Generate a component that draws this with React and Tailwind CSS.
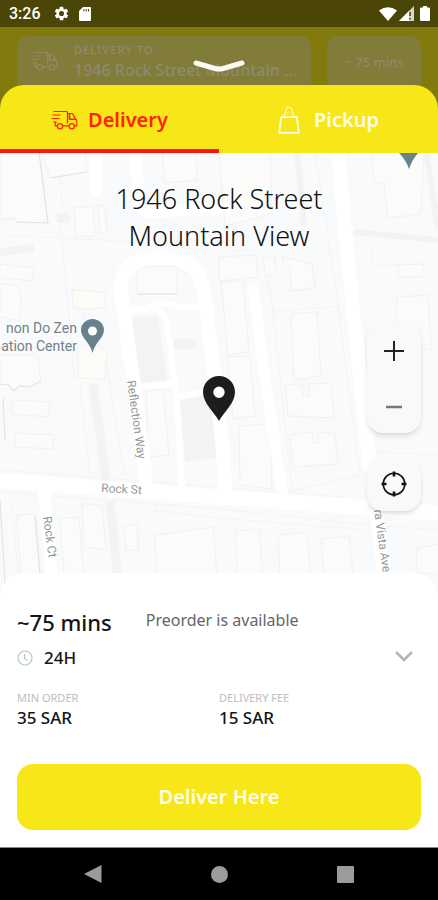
import React, { useState } from "react";

const TruckIcon = ({ className }) => (
  <svg viewBox="0 0 27 20" className={className} fill="none" stroke="currentColor" strokeWidth="1.2" strokeLinecap="round" strokeLinejoin="round">
    <path d="M3 1.500H15.500Q16.500 1.500 16.500 2.500V13M2 5H9M1 8.500H8M2.500 12H5.500M4.500 12L4 15.800H6M12 15.800H18M23.500 15.800H25.800V11Q25.800 9.500 24.500 9M16.500 3.500H21.500L24.500 9" />
    <path d="M18.500 3.800V9.200H24.300" strokeWidth="1.600" />
    <circle cx="9" cy="16.300" r="2.600" />
    <circle cx="20.800" cy="16.300" r="2.600" />
  </svg>
);

const BagIcon = ({ className }) => (
  <svg viewBox="0 0 22 28" className={className} fill="none" stroke="currentColor" strokeLinejoin="round">
    <path d="M3.200 11.200H18.800L20.800 26.800H1.200Z" strokeWidth="1.700" />
    <path d="M6 11L8.200 3.500Q8.800 1.300 11 1.300T13.800 3.500L16 11" strokeWidth="1.400" opacity=".7" />
    <path d="M8.500 9L9.800 6H12.200L13.500 9" strokeWidth="1" opacity=".4" />
  </svg>
);

const buildings = [
  "0,150 39,150 48,223 16,222 15,218 0,219",
  "41,150 50,178 87,172 85,150",
  "163,150 196,150 197,180 164,183",
  "74,208 93,206 95,236 76,237",
  "98,206 105,205 107,232 100,234",
  "0,264 34,268 33,281 0,278",
  "0,284 14,285 21,291 20,321 0,317",
  "0,355 37,355 41,381 30,387 19,386 14,391 9,385 0,384",
  "12,400 50,402 49,417 11,414",
  "16,433 54,435 53,449 15,447",
  "137,267 177,266 177,294 137,294",
  "146,391 163,389 169,455 148,457",
  "17,515 35,514 43,600 22,600",
  "60,518 79,517 86,600 66,600",
  "82,504 102,505 106,549 84,548",
  "123,526 137,524 139,549 126,551",
  "155,535 213,527 219,600 157,600",
  "219,154 270,150 272,214 225,226",
  "219,257 256,255 258,277 219,281",
  "263,258 275,257 276,275 266,276",
  "282,257 312,264 315,288 291,291 290,268 284,266",
  "221,282 243,281 249,352 228,355",
  "291,314 317,312 321,376 294,380",
  "371,150 374,182 384,183 388,218 421,214 424,150",
  "398,265 424,264 424,277 398,277",
  "397,297 428,295 431,350 394,345",
  "227,357 250,356 255,416 233,419",
  "285,385 302,384 303,396 309,396 309,384 331,383 334,418 288,416",
  "290,435 312,432 313,443 318,443 318,432 335,434 338,464 292,467",
  "239,426 270,424 272,489 240,485",
  "235,531 259,529 265,600 239,600",
  "278,535 307,532 313,600 281,600",
  "321,539 349,536 356,600 326,600",
  "417,548 440,544 440,575 416,572",
];

const MapCanvas = () => (
  <svg viewBox="0 153 438 444" preserveAspectRatio="xMidYMin slice" className="absolute inset-0 w-full h-full bg-[#f9fafb]">
    <g fill="none" stroke="#f2f3f5">
      <path d="M93 384L106 480M110 500L120 600" strokeWidth="9" />
      <path d="M354 232L438 240M426 150L438 228M297 150L304 225" strokeWidth="6" />
      <path d="M0 252L34 248" strokeWidth="8" />
      <path d="M57 218H70M174 344H196" strokeWidth="10" />
    </g>
    <g fill="none" stroke="#f3f4f4" strokeWidth="1">
      <path d="M0 235L120 241L205 250L330 250M60 225L68 300L74 380M60 150L62 210M0 470L130 480L345 497M0 492L36 494M52 496L220 509L370 525L438 530" />
      <path d="M262 255L274 312L338 306L360 475L288 492M315 150L340 315M370 230L372 265L438 264M375 445L382 500M438 455L375 452M12 500L20 600M155 500L158 520" />
      <path d="M152 510L219 518L366 530M80 385L90 475M107 365L124 475M270 285L292 490" />
    </g>
    <g fill="#fbfbfa" stroke="#f1f1f0" strokeWidth="1">
      {buildings.map((points) => (
        <polygon key={points} points={points} />
      ))}
    </g>
    <path d="M72 290L105 292L105 308L82 309L84 320M72 290L73 307L82 309M78 345L107 348L105 379L78 378Z" fill="#fdfbf7" stroke="#f6f2ea" />
    <path d="M137 294H177M16 222L48 223L39 153M0 500L6 600M35 515L42 600M3 398L5 440M50 178L87 172M0 384L9 385L14 391L19 386L30 387L41 381" fill="none" stroke="#e4e4e3" strokeWidth="1.200" />
    <g fill="#f1f3f4">
      <polygon points="131,318 158,316 167,380 137,384" />
      <polygon points="180,398 214,393 220,457 185,462" />
    </g>
    <g fill="none" stroke="#fff" strokeLinecap="round" strokeLinejoin="round">
      <path d="M96 145V190" strokeWidth="12" />
      <path d="M135 145L139 205Q141 212 155 212L225 208" strokeWidth="12" />
      <path d="M146 482L134 385L121 292Q119 262 152 258Q190 256 198 274Q205 286 207 315L221 430L226 495" strokeWidth="14" />
      <path d="M128 310L155 309Q165 312 167 325L176 390L182 485M150 306Q162 300 178 307L203 306M140 387L174 383M180 397L210 391" strokeWidth="6" />
      <path d="M253 288L264 370L282 492" strokeWidth="11" />
      <path d="M338 145L344 220L355 330L366 430L388 605" strokeWidth="14" />
      <path d="M-10 480L219 497L450 514" strokeWidth="15" />
      <path d="M44 490L54 605" strokeWidth="12" />
    </g>
    <g fill="#94989b" fontFamily="Roboto, sans-serif" fontSize="12">
      <text x="101" y="492" transform="rotate(3 101 492)">Rock St</text>
      <text x="127" y="381" transform="rotate(82 127 381)">Reflection Way</text>
      <text x="43" y="517" transform="rotate(82 43 517)">Rock Ct</text>
      <text x="374" y="510" transform="rotate(82 374 510)">ra Vista Ave</text>
    </g>
    <g fill="#74828a" fontFamily="Roboto, sans-serif" fontSize="14" textAnchor="end">
      <text x="77" y="333">non Do Zen</text>
      <text x="77" y="351">ation Center</text>
    </g>
    <path d="M92.500 319C86 319 81 324 81 330C81 338 90 342 92.500 353C95 342 104 338 104 330C104 324 99 319 92.500 319Z" fill="#69818d" />
    <circle cx="92.500" cy="331" r="4.500" fill="#fff" />
    <path d="M399 153H418Q412 160 409 169Q406 160 399 153Z" fill="#69818d" />
  </svg>
);

const StatusBar = () => (
  <div className="h-[27px] bg-[#4b4608] text-white flex items-center justify-between pl-[9px] pr-2 font-[Roboto,sans-serif]">
    <div className="flex items-center">
      <span className="text-base font-medium">3:26</span>
      <svg viewBox="0 0 24 24" className="w-[17px] h-[17px] ml-3" fill="currentColor">
        <path d="M19.140 12.940c.04-.3.060-.61.060-.94s-.02-.64-.07-.94l2.030-1.580a.49.49 0 0 0 .12-.61l-1.920-3.320a.49.49 0 0 0-.59-.22l-2.390.96a7 7 0 0 0-1.620-.94L14.400 2.810A.48.48 0 0 0 13.920 2.400h-3.840a.48.48 0 0 0-.47.41L9.250 5.350a7 7 0 0 0-1.620.94l-2.390-.96a.48.48 0 0 0-.59.22L2.740 8.870a.47.47 0 0 0 .12.610l2.030 1.580a6 6 0 0 0 0 1.880l-2.030 1.580a.49.49 0 0 0-.12.610l1.920 3.320c.12.220.37.290.59.220l2.390-.96c.5.380 1.030.7 1.620.94l.36 2.540c.05.240.24.410.48.410h3.840c.24 0 .44-.17.47-.41l.36-2.540a7 7 0 0 0 1.620-.94l2.390.96c.22.080.47 0 .59-.22l1.920-3.320a.47.47 0 0 0-.12-.61zM12 15.600a3.600 3.600 0 1 1 0-7.200 3.600 3.600 0 0 1 0 7.200z" />
      </svg>
      <svg viewBox="0 0 12 14" className="w-3 h-[14px] ml-[9px]" fill="currentColor">
        <path d="M4 0H11Q12 0 12 1V13Q12 14 11 14H1Q0 14 0 13V4ZM4.500 2V4.500H5.500V2ZM6.800 2V4.500H7.800V2ZM9 2V4.500H10V2Z" fillRule="evenodd" />
      </svg>
    </div>
    <div className="flex items-center gap-[2px]">
      <svg viewBox="0 0 18 14" className="w-[18px] h-[14px]" fill="currentColor">
        <path d="M0 3.500Q9-3 18 3.500L9 14Z" />
      </svg>
      <svg viewBox="0 0 15 15" className="w-[15px] h-[15px]">
        <path d="M0 15L15 0V15Z" fill="#d8d7cc" />
        <path d="M0 15L10 5V15Z" fill="#fff" />
        <path d="M11 6V10M11 12V13.500" stroke="#4b4608" strokeWidth="1.600" />
      </svg>
      <svg viewBox="0 0 10 15" className="w-[10px] h-[15px] ml-1" fill="currentColor">
        <path d="M3 0H7V1.500H9Q10 1.500 10 2.500V14Q10 15 9 15H1Q0 15 0 14V2.500Q0 1.500 1 1.500H3Z" />
      </svg>
    </div>
  </div>
);

const App = () => {
  const [tab, setTab] = useState("delivery");

  return (
    <div className="min-h-screen flex flex-col bg-white font-['Noto_Sans',sans-serif]">
      <StatusBar />

      <div className="relative h-[82px] bg-[#827a0c] px-[17px] pt-[9px] flex gap-4 text-[#908a6c]">
        <div className="flex-1 min-w-0 h-[60px] rounded-[10px] bg-[#817c39] flex pl-[14px]">
          <TruckIcon className="w-[27px] h-5 mt-[15px] shrink-0" />
          <div className="ml-4 pt-[6px] min-w-0">
            <p className="text-[11px] leading-4 font-medium tracking-widest">DELIVERY TO</p>
            <p className="text-base leading-6 font-medium truncate">1946 Rock Street Mountain ...</p>
          </div>
        </div>
        <div className="w-[94px] h-[60px] rounded-[10px] bg-[#817c39] text-[13px] leading-[52px] text-center font-medium">
          ~ 75 mins
        </div>
        <button aria-label="Close" className="absolute left-1/2 -translate-x-1/2 top-8 text-[#fcfbf3]">
          <svg viewBox="0 0 52 14" className="w-[52px] h-[14px]" fill="none" stroke="currentColor" strokeWidth="5" strokeLinecap="round" strokeLinejoin="round">
            <path d="M3 4L22 9.500Q26 10.500 30 9.500L49 4" />
          </svg>
        </button>
      </div>

      <div className="relative -mt-6 h-[68px] rounded-t-[24px] bg-[#f7e618] flex overflow-hidden text-xl font-semibold">
        <button
          onClick={() => setTab("delivery")}
          className={`flex-1 flex items-center justify-center gap-[10px] border-b-4 pt-[6px] ${tab === "delivery" ? "text-[#ff2200] border-[#fb1705]" : "text-[#fffde6] border-transparent"}`}
        >
          <TruckIcon className="w-[27px] h-5" />
          Delivery
        </button>
        <button
          onClick={() => setTab("pickup")}
          className={`flex-1 flex items-center justify-center gap-[14px] border-b-4 pt-[6px] ${tab === "pickup" ? "text-[#ff2200] border-[#fb1705]" : "text-[#fffde6] border-transparent"}`}
        >
          <BagIcon className="w-[22px] h-7" />
          Pickup
        </button>
      </div>

      <div className="relative flex-1 min-h-[444px] overflow-hidden">
        <MapCanvas />
        <h1 className="relative pt-[27px] mx-auto w-60 text-center text-[27px] leading-[37px] text-[#111] font-light">
          1946 Rock Street Mountain View
        </h1>
        <svg viewBox="0 0 32 45" className="absolute left-1/2 -translate-x-1/2 top-[223px] w-8 h-[45px]">
          <path d="M16 0C7 0 0 7 0 16C0 27 11 36 16 45C21 36 32 27 32 16C32 7 25 0 16 0ZM16 10.500A5.700 5.700 0 1 1 16 21.900A5.700 5.700 0 1 1 16 10.500Z" fill="#1d1d1d" fillRule="evenodd" />
        </svg>
        <div className="absolute right-[17px] top-[168px] flex flex-col gap-6 text-[#222]">
          <div className="w-[54px] rounded-[16px] bg-[#f9f9f8] shadow-md flex flex-col">
            <button aria-label="Zoom in" className="h-14 pt-1 flex items-center justify-center">
              <svg viewBox="0 0 20 20" className="w-5 h-5" stroke="currentColor" strokeWidth="2">
                <path d="M10 0V20M0 10H20" />
              </svg>
            </button>
            <button aria-label="Zoom out" className="h-14 pt-1 flex items-center justify-center">
              <svg viewBox="0 0 20 20" className="w-5 h-5" stroke="#777" strokeWidth="2.500">
                <path d="M2 10H18" />
              </svg>
            </button>
          </div>
          <button aria-label="My location" className="w-[54px] h-[54px] rounded-[16px] bg-[#f9f9f8] shadow-md flex items-center justify-center">
            <svg viewBox="0 0 26 26" className="w-[26px] h-[26px]" fill="none" stroke="#111">
              <circle cx="13" cy="13" r="10.800" strokeWidth="1.600" />
              <path d="M13 .5V5.500M13 20.500V25.500M.5 13H5.500M20.500 13H25.500" strokeWidth="2.600" />
            </svg>
          </button>
        </div>
      </div>

      <div className="relative -mt-6 rounded-t-[24px] bg-white px-[17px] pt-[33px] pb-[17px]">
        <div className="flex items-start gap-[34px]">
          <p className="text-[22px] leading-8 font-medium text-[#151515]">~75 mins</p>
          <p className="text-base leading-7 text-[#666]">Preorder is available</p>
        </div>
        <div className="flex items-center mt-2">
          <svg viewBox="0 0 16 16" className="w-4 h-4" fill="none" stroke="#b4c8b4" strokeWidth="1.200">
            <circle cx="8" cy="8" r="7" />
            <path d="M7.500 4V8.500L10.500 10.500" />
          </svg>
          <span className="ml-[11px] text-[17px] leading-6 font-medium text-[#151515]">24H</span>
          <button aria-label="Show opening hours" className="ml-auto mr-2">
            <svg viewBox="0 0 18 12" className="w-[18px] h-3 -mt-1" fill="none" stroke="#b3b3b3" strokeWidth="2.500">
              <path d="M1 2L9 10L17 2" />
            </svg>
          </button>
        </div>
        <dl className="grid grid-cols-2 mt-5">
          <div>
            <dt className="text-[11px] leading-4 text-[#bdbdbd]">MIN ORDER</dt>
            <dd className="text-[17px] leading-6 font-medium text-[#151515]">35 SAR</dd>
          </div>
          <div>
            <dt className="text-[11px] leading-4 text-[#bdbdbd]">DELIVERY FEE</dt>
            <dd className="text-[17px] leading-6 font-medium text-[#151515]">15 SAR</dd>
          </div>
        </dl>
        <button className="mt-[34px] w-full h-[66px] rounded-[16px] bg-[#f7e618] text-[#fffde6] text-xl font-semibold">
          Deliver Here
        </button>
      </div>

      <div className="h-[53px] border-t border-[#888] bg-black flex items-center justify-around px-[29px] text-[#9b9b9b]">
        <button aria-label="Back">
          <svg viewBox="0 0 18 18" className="w-[18px] h-[18px]" fill="currentColor">
            <path d="M17.500 0V18L0 9Z" />
          </svg>
        </button>
        <button aria-label="Home" className="w-[17px] h-[17px] rounded-full bg-[#9b9b9b]" />
        <button aria-label="Recent apps" className="w-[17px] h-[17px] rounded-[1px] bg-[#9b9b9b]" />
      </div>
    </div>
  );
};

export default App;
